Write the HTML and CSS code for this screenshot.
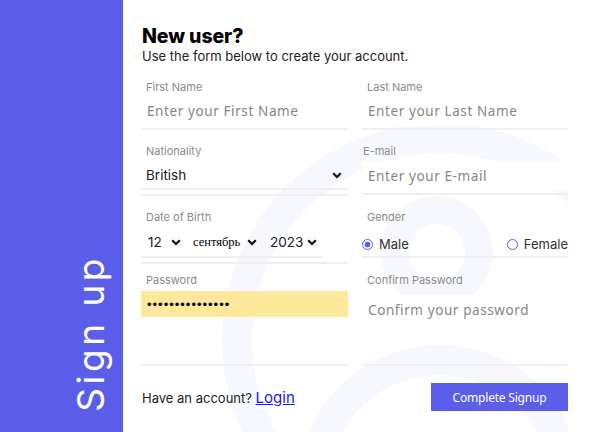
FILE: index.html
```html
<!DOCTYPE html>
<html lang="en">
<head>
<meta charset="utf-8">
<title>Sign up</title>
<link rel="stylesheet" href="styles.css">
</head>
<body>
<div class="page">
  <aside class="side">
    <h1 class="side-title">Sign up</h1>
  </aside>
  <main class="main">
    <svg class="bg-art" viewBox="123 0 445 432" width="445" height="432" aria-hidden="true">
      <g fill="none" stroke="#f7f8fe">
        <circle cx="440" cy="341" r="203" stroke-width="30"/>
        <circle cx="437" cy="252" r="42" stroke-width="28"/>
        <circle cx="440" cy="487" r="127" stroke-width="30"/>
      </g>
    </svg>
    <header class="intro">
      <h2 class="intro-title">New user?</h2>
      <p class="intro-text">Use the form below to create your account.</p>
    </header>
    <form class="form">
      <div class="grid">
        <div class="field row1">
          <label class="label">First Name</label>
          <input class="text-input" type="text" placeholder="Enter your First Name">
        </div>
        <div class="field row1">
          <label class="label">Last Name</label>
          <input class="text-input" type="text" placeholder="Enter your Last Name">
        </div>

        <div class="field row2-left">
          <label class="label">Nationality</label>
          <div class="select-wrap">
            <select class="select"><option>British</option></select>
            <svg class="chev" viewBox="0 0 10 7" width="10" height="7"><polyline points="1.2,1.2 5,5 8.8,1.2" fill="none" stroke="#111" stroke-width="2.2"/></svg>
          </div>
        </div>
        <div class="field row2-right">
          <label class="label label-tight">E-mail</label>
          <input class="text-input" type="email" placeholder="Enter your E-mail">
        </div>

        <div class="field row3-left">
          <label class="label">Date of Birth</label>
          <div class="date-group">
            <div class="mini">
              <select class="mini-select day"><option>12</option></select>
              <svg class="chev" viewBox="0 0 10 7" width="10" height="7"><polyline points="1.2,1.2 5,5 8.8,1.2" fill="none" stroke="#111" stroke-width="2.2"/></svg>
            </div>
            <div class="mini">
              <select class="mini-select month"><option>сентябрь</option></select>
              <svg class="chev" viewBox="0 0 10 7" width="10" height="7"><polyline points="1.2,1.2 5,5 8.8,1.2" fill="none" stroke="#111" stroke-width="2.2"/></svg>
            </div>
            <div class="mini">
              <select class="mini-select year"><option>2023</option></select>
              <svg class="chev" viewBox="0 0 10 7" width="10" height="7"><polyline points="1.2,1.2 5,5 8.8,1.2" fill="none" stroke="#111" stroke-width="2.2"/></svg>
            </div>
          </div>
        </div>
        <div class="field row3-right">
          <label class="label">Gender</label>
          <div class="radios">
            <label class="radio"><input class="radio-input" type="radio" name="g" checked><span>Male</span></label>
            <label class="radio"><input class="radio-input" type="radio" name="g"><span>Female</span></label>
          </div>
        </div>

        <div class="field row4">
          <label class="label">Password</label>
          <input class="pass-input" type="password" value="abcdefghijklmno">
        </div>
        <div class="field row4">
          <label class="label">Confirm Password</label>
          <input class="text-input confirm" type="password" placeholder="Confirm your password">
        </div>
      </div>

      <div class="footer">
        <p class="have">Have an account? <a class="login" href="#">Login</a></p>
        <button class="submit" type="button">Complete Signup</button>
      </div>
    </form>
  </main>
</div>
</body>
</html>
```

FILE: styles.css
```css
* { box-sizing: border-box; }
html, body { margin: 0; padding: 0; }
body {
  width: 596px;
  height: 432px;
  overflow: hidden;
  background: #fff;
  font-family: Inter, "Noto Sans", sans-serif;
  color: #222;
}
.page {
  display: flex;
  height: 432px;
}
.side {
  width: 123px;
  flex: none;
  background: #5b5ee9;
  display: flex;
  justify-content: flex-end;
  align-items: flex-end;
  padding: 0 14px 20px 0;
}
.side-title {
  margin: 0;
  writing-mode: vertical-rl;
  transform: rotate(180deg);
  font-family: Inter, sans-serif;
  font-weight: 400;
  font-size: 37px;
  line-height: 37px;
  letter-spacing: 3.5px;
  color: #fff;
}
.main {
  position: relative;
  flex: 1;
  padding: 25px 28px 0 18px;
}
.bg-art {
  position: absolute;
  left: 0;
  top: 0;
  z-index: 0;
}
.intro, .form { position: relative; z-index: 1; }
.intro { padding-left: 1px; }
.intro-title {
  margin: 0;
  font-size: 19.5px;
  line-height: 22px;
  font-weight: 800;
  color: #000;
  letter-spacing: -0.1px;
}
.intro-text {
  margin: 0;
  font-size: 13px;
  line-height: 18px;
  color: #222;
}
.form { margin-top: 9px; }
.grid {
  display: grid;
  grid-template-columns: 207px 206px;
  column-gap: 14px;
  align-items: start;
}
.field {
  display: flex;
  flex-direction: column;
  border-bottom: 2px solid #f0f0f0;
}
.label {
  font-size: 11px;
  line-height: 14px;
  color: #8b8b8b;
  padding-left: 5px;
}
.label-tight { padding-left: 1px; }
.text-input {
  height: 30px;
  border: 0;
  outline: 0;
  background: #fff;
  padding: 0 0 0 6px;
  font-family: "Noto Sans", sans-serif;
  font-size: 13.5px;
  letter-spacing: 0.6px;
  color: #222;
}
.text-input::placeholder { color: #868686; }
.row1 { padding: 6px 0 2px; }
.row1 .text-input { margin-top: 2px; }
.row2-left { padding: 14px 0 4px; }
.select-wrap {
  margin-top: 4px;
  height: 28px;
  display: flex;
  align-items: center;
  border-bottom: 2px solid #f0f0f0;
}
.select {
  appearance: none;
  -webkit-appearance: none;
  flex: 1;
  border: 0;
  outline: 0;
  background: transparent;
  font-family: Inter, sans-serif;
  font-size: 13.5px;
  color: #222;
  padding: 0 0 0 5px;
  height: 26px;
}
.chev { flex: none; display: block; }
.select-wrap .chev { margin: 0 6px 0 -16px; }
.row2-right { padding: 14px 0 2px; }
.row2-right .text-input { margin-top: 3px; }
.row3-left { padding: 14px 0 4px; }
.date-group {
  margin-top: 4px;
  width: 181px;
  height: 30px;
  display: flex;
  align-items: center;
  border-bottom: 2px solid #f0f0f0;
}
.mini {
  display: flex;
  align-items: center;
}
.mini-select {
  appearance: none;
  -webkit-appearance: none;
  border: 0;
  outline: 0;
  background: transparent;
  padding: 0;
  font-family: Inter, sans-serif;
  font-size: 13.5px;
  color: #222;
}
.day { margin-left: 7px; margin-right: 9px; }
.month {
  font-family: "Liberation Serif", serif;
  font-size: 12.5px;
  color: #000;
  margin-left: 12px;
  margin-right: 6px;
}
.year { margin-left: 13px; margin-right: 3px; }
.row3-right { padding: 14px 0 0; }
.radios {
  margin-top: 8px;
  height: 24px;
  display: flex;
  align-items: center;
  justify-content: space-between;
}
.radio {
  display: flex;
  align-items: center;
  gap: 6px;
  font-size: 13px;
  color: #333;
}
.radio-input {
  appearance: none;
  -webkit-appearance: none;
  margin: 0;
  width: 11px;
  height: 11px;
  border-radius: 50%;
  border: 1.5px solid #5b5ee9;
  background: #fff;
}
.radio-input:checked {
  background: radial-gradient(circle, #5b5ee9 0 2.6px, #fff 3.2px);
}
.row4 {
  height: 102px;
  padding-top: 9px;
}
.pass-input {
  margin-top: 4px;
  height: 26px;
  border: 0;
  outline: 0;
  background: #fee89b;
  padding: 0 0 0 6px;
  font-family: "Liberation Sans", sans-serif;
  font-size: 13px;
  letter-spacing: 1px;
  color: #000;
}
.row4 .confirm { margin-top: 8px; }
.footer {
  margin-top: 17px;
  display: flex;
  justify-content: space-between;
  align-items: center;
}
.have {
  margin: 0;
  padding-left: 1px;
  font-size: 13px;
  color: #222;
}
.login {
  font-size: 15px;
  color: #1a1aee;
  text-decoration: underline;
}
.submit {
  width: 137px;
  height: 28px;
  border: 0;
  background: #5b5ee9;
  color: #fff;
  font-family: "Noto Sans", sans-serif;
  font-size: 12px;
  letter-spacing: -0.2px;
  padding: 0;
}
```
